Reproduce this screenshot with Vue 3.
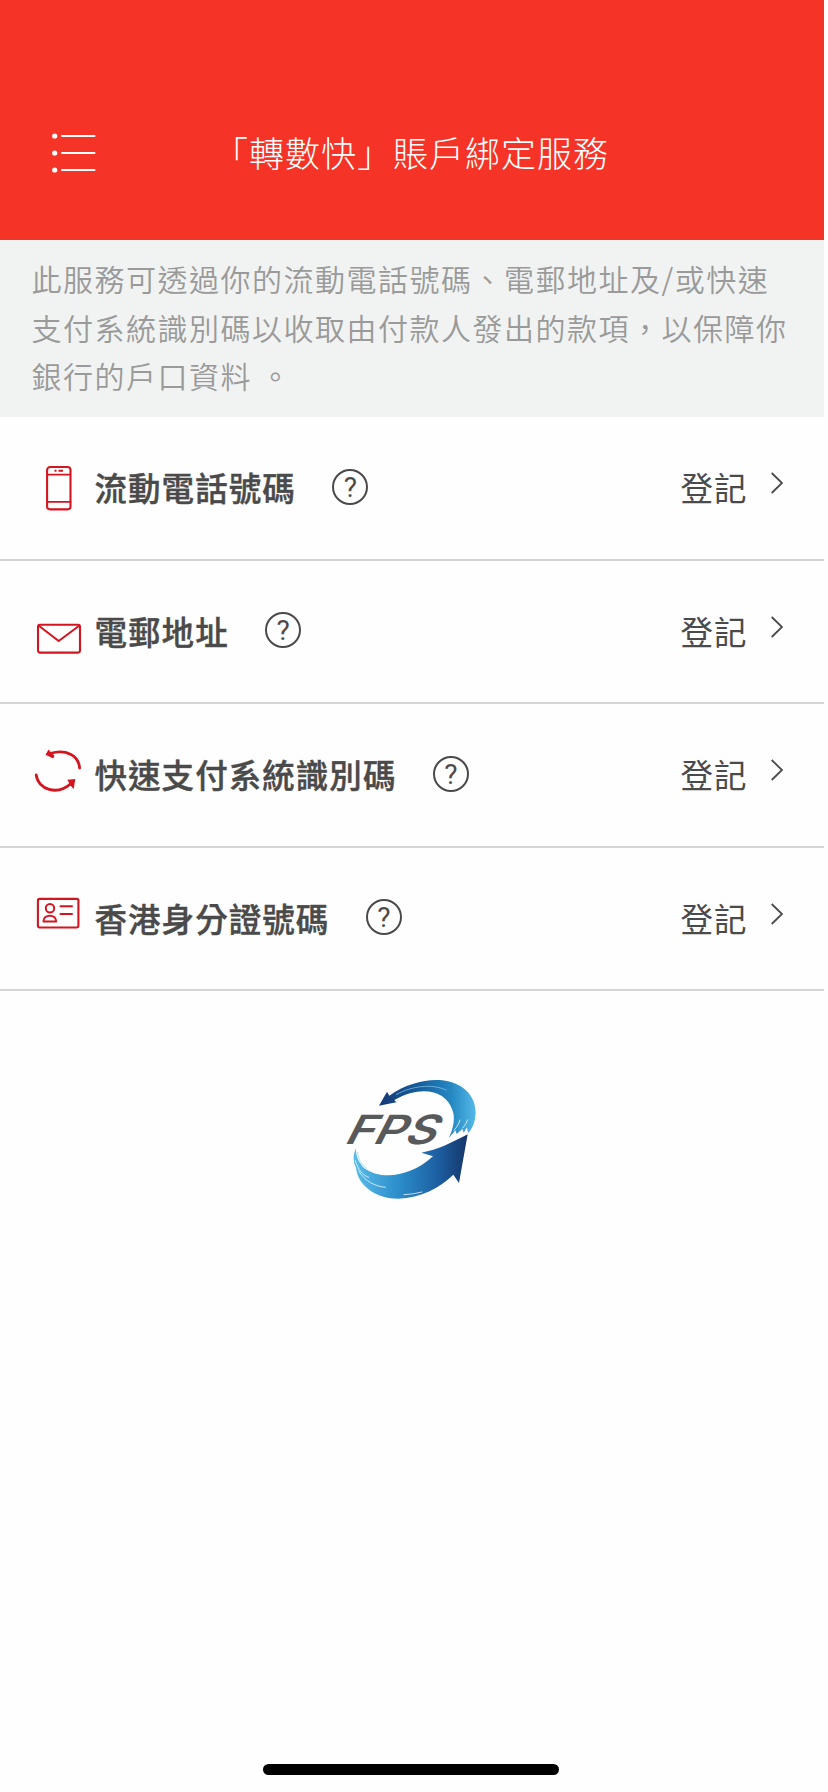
<template>
  <div class="app">
    <header class="header">
      <svg class="menu" width="44" height="40" viewBox="0 0 44 40">
        <g fill="#fff">
          <circle cx="2.7" cy="3" r="2.6" />
          <circle cx="2.7" cy="20" r="2.6" />
          <circle cx="2.7" cy="37" r="2.6" />
        </g>
        <path d="M10 3H42.5M10 20H42.5M10 37H42.5" stroke="#fff" stroke-width="2" stroke-linecap="round" />
      </svg>
      <h1 class="title">「轉數快」賬戶綁定服務</h1>
    </header>
    <p class="intro">此服務可透過你的流動電話號碼、電郵地址及/或快速支付系統識別碼以收取由付款人發出的款項，以保障你銀行的戶口資料 。</p>
    <ul class="list">
      <li v-for="item in items" :key="item.icon" class="row">
        <svg class="row-icon" width="50" height="50" viewBox="0 0 50 50" fill="none" stroke="#d3151f" stroke-width="2.1">
          <g v-if="item.icon === 'phone'">
            <rect x="12.1" y="4" width="23.4" height="42.4" rx="3" />
            <path d="M12 11.6H35.5M12 38.8H35.5" stroke-width="1.8" />
            <path d="M19.5 7.7H21.5M23.5 7.7H28" />
          </g>
          <g v-else-if="item.icon === 'mail'">
            <rect x="3" y="18.8" width="42" height="27.8" rx="2" />
            <path d="M3.5 19.5L23.7 35L44.5 19.5" stroke-linejoin="round" />
          </g>
          <g v-else-if="item.icon === 'transfer'">
            <path d="M15.5 3.4C31-1 43.5 5 44.6 18" stroke-width="2.8" stroke-linecap="round" />
            <path d="M1.2 25C3.3 39.5 22 46 36 33.5" stroke-width="2.8" stroke-linecap="round" />
            <path d="M10.5 4.8L13.6 -.4L15.5 2L19.5 5.8L18.2 8.6Z" fill="#d3151f" stroke="none" />
            <path d="M40.3 29L38.7 38.9L35.4 35.4L32.4 29.8Z" fill="#d3151f" stroke="none" />
          </g>
          <g v-else>
            <rect x="2.9" y="5.9" width="40.5" height="28.6" rx="1.7" />
            <circle cx="15" cy="15.2" r="4.2" stroke-width="2" />
            <path d="M8.4 28.4C8.4 20.8 21.2 20.8 21.2 28.4Z" stroke-width="2" stroke-linejoin="round" />
            <path d="M25.5 13.3H37M25.5 21.1H37" stroke-width="2" stroke-linecap="round" />
          </g>
        </svg>
        <span class="label">{{ item.label }}</span>
        <span class="help">?</span>
        <span class="action">登記</span>
        <svg class="chevron" width="12" height="22" viewBox="0 0 12 22">
          <path d="M.7 1L11 11L.7 21" fill="none" stroke="#4a4a4a" stroke-width="1.8" />
        </svg>
      </li>
    </ul>
    <svg class="logo" width="160" height="160" viewBox="0 0 480 480">
      <defs>
        <linearGradient id="topArc" x1="0" x2="1">
          <stop offset="0" stop-color="#163973" />
          <stop offset=".4" stop-color="#165c9d" />
          <stop offset=".75" stop-color="#2588c2" />
          <stop offset="1" stop-color="#55b9e8" />
        </linearGradient>
        <linearGradient id="bottomArc" x1="0" x2="1">
          <stop offset="0" stop-color="#59bce8" />
          <stop offset=".4" stop-color="#2b8dca" />
          <stop offset=".75" stop-color="#1c5da0" />
          <stop offset="1" stop-color="#153568" />
        </linearGradient>
      </defs>
      <path fill="url(#topArc)" d="M147 137L171 95L178 107C225 72 285 57 330 60C398 65 437 107 437 158C436 183 429 205 414 219L411 202L401 218L397 207L380 222L376 211L356 235C371 204 377 171 366 147C348 95 278 72 193 120L199 127Z" />
      <path fill="url(#bottomArc)" d="M413 223L387 369L370 344C329 383 272 414 205 416C139 416 83 377 78 323L74 314C68 294 72 278 78 265C77 290 87 308 101 323C151 361 239 353 309 289L274 278C323 270 367 247 413 223Z" />
      <path fill="none" stroke="#fff" stroke-width="2.2" stroke-linecap="round" d="M76 302C84 330 98 345 116 352M86 333C106 365 136 379 166 382M222 404Q250 403 276 396M372 211C382 199 388 189 390 180M398 204C406 195 411 187 412 180" />
      <path fill="none" stroke="#8dccea" stroke-width="2" d="M198 104C245 78 307 70 350 91M83 276C83 299 96 314 110 325" />
      <text class="logo-text" transform="translate(39 251) skewX(-27)" x="0" y="0" textLength="272" lengthAdjust="spacingAndGlyphs">FPS</text>
    </svg>
    <div class="home-bar"></div>
  </div>
</template>

<script setup>
const items = [
  { icon: 'phone', label: '流動電話號碼' },
  { icon: 'mail', label: '電郵地址' },
  { icon: 'transfer', label: '快速支付系統識別碼' },
  { icon: 'id', label: '香港身分證號碼' }
]
</script>

<style>
body {
  margin: 0;
  background-color: #fefefe;
}
</style>

<style scoped>
.app {
  display: flex;
  flex-direction: column;
  width: 824px;
  height: 1792px;
  font-family: "Noto Sans CJK TC", sans-serif;
  color: #4a4a4a;
}
.header {
  display: flex;
  align-items: center;
  box-sizing: border-box;
  height: 240px;
  padding: 66px 0 0 52px;
  background-color: #f63327;
}
.title {
  margin: 0 0 3px 117px;
  font-size: 35px;
  font-weight: 300;
  letter-spacing: 1px;
  line-height: 52px;
  color: #fff;
}
.intro {
  box-sizing: border-box;
  height: 177px;
  margin: 0;
  padding: 14px 32px 0 31.5px;
  font-size: 30px;
  font-weight: 350;
  letter-spacing: 1.5px;
  line-height: 48.6px;
  color: #999a99;
  background-color: #f1f3f2;
}
.list {
  margin: 0;
  padding: 0;
  list-style: none;
}
.row {
  display: flex;
  align-items: center;
  box-sizing: border-box;
  height: 143.5px;
  padding: 0 41.5px 0 35px;
  border-bottom: 2px solid #d3d4d4;
}
.row-icon {
  margin-right: 9.5px;
  overflow: visible;
}
.label {
  margin-bottom: 2px;
  font-size: 32.5px;
  font-weight: 500;
  letter-spacing: 1.05px;
  -webkit-text-stroke: 0.4px #4a4a4a;
}
.help {
  box-sizing: border-box;
  width: 36px;
  height: 36px;
  margin: 0 0 2px 36.5px;
  border: 2px solid #4a4a4a;
  border-radius: 50%;
  font-family: Roboto, sans-serif;
  font-size: 28px;
  line-height: 34px;
  text-align: center;
}
.action {
  margin: 0 0 2px auto;
  font-size: 32.5px;
  letter-spacing: 1px;
}
.chevron {
  margin: 0 0 9px 23px;
}
.logo {
  align-self: center;
  margin: 69px 4px 0 0;
}
.logo-text {
  font-family: Inter, sans-serif;
  font-size: 121px;
  font-weight: 600;
  fill: #58595b;
}
.home-bar {
  align-self: center;
  width: 296px;
  height: 11px;
  margin: auto 3px 17px 0;
  border-radius: 6px;
  background-color: #000;
}
</style>
